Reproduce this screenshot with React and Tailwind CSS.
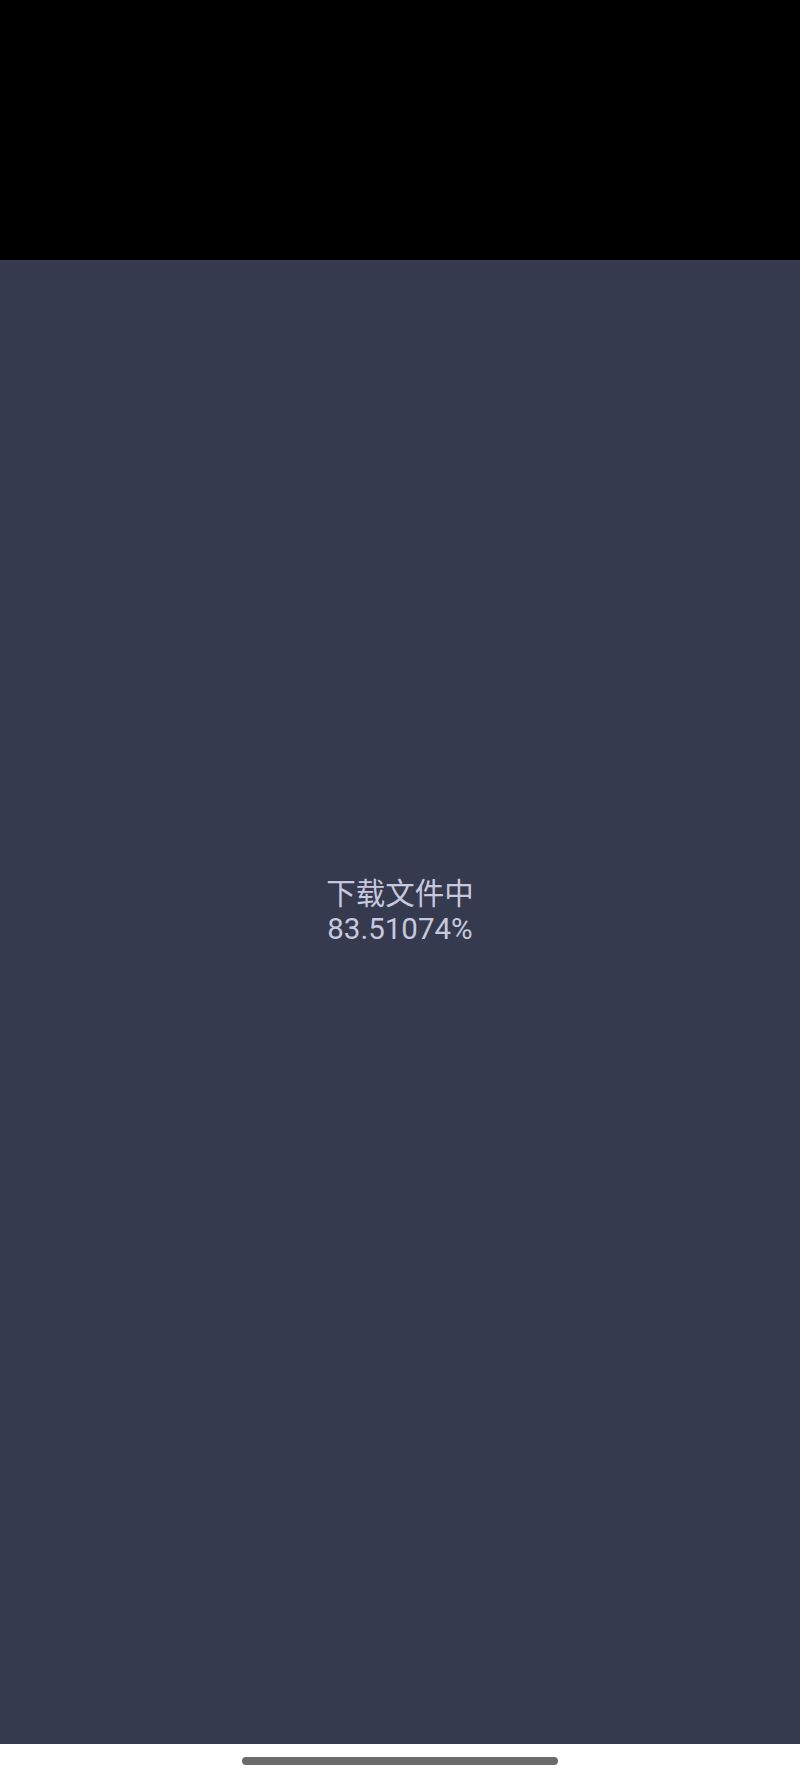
import React from 'react';

export default function App() {
    return (
        <div className="flex flex-col w-full h-[1778px] bg-white" style={{ fontFamily: 'Roboto, "Noto Sans CJK SC", sans-serif' }}>
            {/* status bar area */}
            <div className="h-[260px] bg-black shrink-0" />

            {/* loading content */}
            <div className="flex-1 bg-[#363a4e] flex flex-col items-center justify-center pb-[180px] text-[#c6c9dd] text-[29.5px] leading-[35px] text-center">
                <div>下载文件中</div>
                <div>83.51074%</div>
            </div>

            {/* nav bar */}
            <div className="h-[34px] bg-white flex items-center justify-center shrink-0">
                <div className="w-[316px] h-[8px] rounded-full bg-[#6b6b6b]" />
            </div>
        </div>
    );
}
